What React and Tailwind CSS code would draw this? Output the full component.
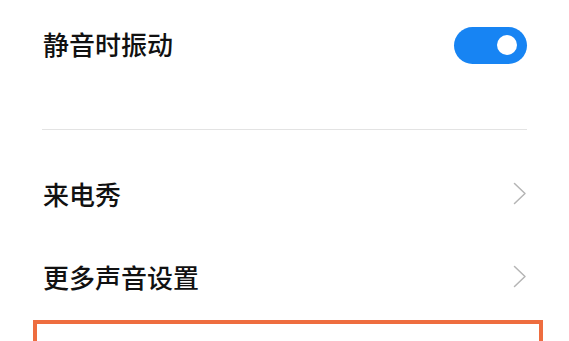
export default function App() {
  return (
    <div
      className="w-[569px] h-[341px] overflow-hidden bg-white"
      style={{ fontFamily: '"Noto Sans CJK SC", "Noto Sans", sans-serif' }}
    >
      <div className="flex flex-col px-[42px]">

        {/* toggle row */}
        <div className="flex items-center justify-between h-[90px]">
          <span className="text-[26px] font-medium text-[#111] pl-[1px] pb-[4px]">静音时振动</span>
          <div className="flex items-center justify-end w-[73px] h-[37px] rounded-full bg-[#1784f3] pr-[10px]">
            <div className="w-[20px] h-[20px] rounded-full bg-white" />
          </div>
        </div>

        <div className="mt-[39px] h-px bg-[#e3e3e3]" />

        <div className="mt-[23px] flex items-center justify-between h-[84px]">
          <span className="text-[26px] font-medium text-[#111] pl-[1px] pb-[4px]">来电秀</span>
          <Chevron />
        </div>

        <div className="flex items-center justify-between h-[83px]">
          <span className="text-[26px] font-medium text-[#111] pl-[1px] pb-[4px]">更多声音设置</span>
          <Chevron />
        </div>

        <div className="ml-[-9px] mr-[-16px] h-[40px] border-4 border-[#ee6d3f]" />
      </div>
    </div>
  );
}

function Chevron() {
  return (
    <svg width="14" height="23" viewBox="0 0 14 23" fill="none" className="mt-[-4px]">
      <path d="M1.5 1.5 L12 11.5 L1.5 21.5" stroke="#b5b5b5" strokeWidth="1.5" strokeLinecap="round" strokeLinejoin="round" />
    </svg>
  );
}
